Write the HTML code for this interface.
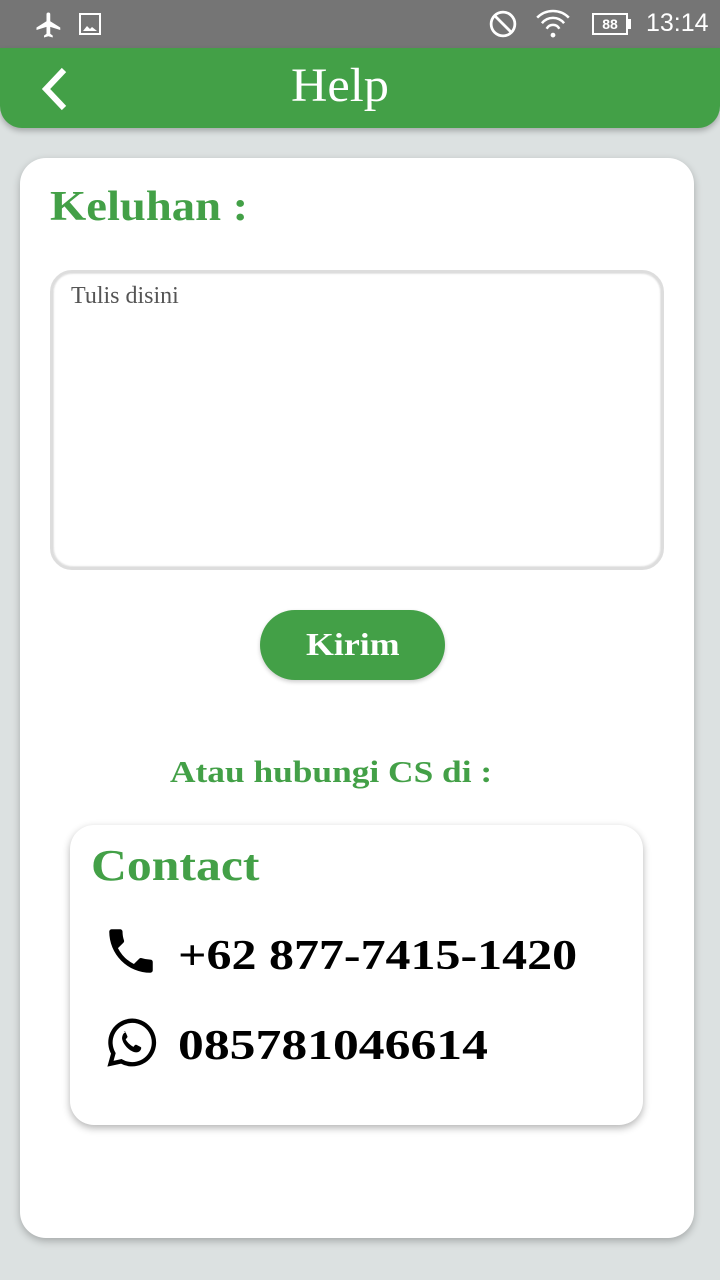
<!DOCTYPE html>
<html><head><meta charset="utf-8"><style>
*{margin:0;padding:0;box-sizing:border-box}
body{width:720px;height:1280px;background:#dce1e1;position:relative;overflow:hidden;font-family:"Liberation Serif",serif}
.sb{position:absolute;top:0;left:0;width:720px;height:48px;background:#757575;color:#fff;font-family:"Liberation Sans",sans-serif}
.bar{position:absolute;top:48px;left:0;width:720px;height:80px;background:#43a047;border-radius:0 0 22px 22px;box-shadow:0 3px 6px rgba(0,0,0,.25)}
.bar h1{position:absolute;left:291px;top:10px;font-weight:normal;color:#fff;font-size:48px;transform:scaleX(1.05);transform-origin:left}
.card{position:absolute;left:20px;top:158px;width:674px;height:1080px;background:#fff;border-radius:26px;box-shadow:0 3px 8px rgba(0,0,0,.25)}
.g{color:#43a047;font-weight:bold;position:absolute;transform-origin:left;white-space:nowrap}
.ta{position:absolute;left:50px;top:270px;width:614px;height:300px;border:3px solid #ddd;border-radius:22px;box-shadow:inset 0 0 2px #bbb}
.ta span{position:absolute;left:18px;top:10px;font-size:24px;color:#555}
.btn{position:absolute;left:260px;top:610px;width:185px;height:70px;background:#43a047;border-radius:35px;color:#fff;font-weight:bold;font-size:32px;text-align:center;line-height:68px;box-shadow:0 2px 4px rgba(0,0,0,.2)}
.btn span{display:inline-block;transform:scaleX(1.12)}
.ct{position:absolute;left:70px;top:825px;width:573px;height:300px;background:#fff;border-radius:24px;box-shadow:0 3px 8px rgba(0,0,0,.3)}
.num{position:absolute;font-weight:bold;font-size:42px;color:#000;transform-origin:left;white-space:nowrap}
</style></head><body>
<div class="sb">
<svg style="position:absolute;left:34px;top:10px" width="30" height="30" viewBox="0 0 24 24"><path fill="#fff" d="M21 16v-2l-8-5V3.5a1.5 1.5 0 0 0-3 0V9l-8 5v2l8-2.5V19l-2 1.5V22l3.5-1 3.5 1v-1.5L13 19v-5.5z"/></svg>
<svg style="position:absolute;left:78px;top:12px" width="24" height="24" viewBox="0 0 24 24"><rect x="2" y="2" width="20" height="20" fill="none" stroke="#fff" stroke-width="2"/><path fill="#fff" d="M5 19l4-5 3 3 2-2 5 4z"/></svg>
<svg style="position:absolute;left:488px;top:9px" width="30" height="30" viewBox="0 0 24 24"><circle cx="12" cy="12" r="9.5" fill="none" stroke="#fff" stroke-width="2.2"/><path d="M5.5 5.5l13 13" stroke="#fff" stroke-width="2.2"/></svg>
<svg style="position:absolute;left:534px;top:8px" width="38" height="32" viewBox="0 0 24 20"><path d="M2 6a14 14 0 0 1 20 0M5 9.5a9 9 0 0 1 14 0M8 13a4.5 4.5 0 0 1 8 0" fill="none" stroke="#fff" stroke-width="1.6"/><circle cx="12" cy="17" r="1.5" fill="#fff"/></svg>
<div style="position:absolute;left:592px;top:13px;width:36px;height:22px;border:2px solid #fff;font-size:14px;font-weight:bold;text-align:center;line-height:18px">88</div>
<div style="position:absolute;left:628px;top:19px;width:3px;height:10px;background:#fff"></div>
<div style="position:absolute;left:646px;top:9px;font-size:25px">13:14</div>
</div>
<div class="bar">
<svg style="position:absolute;left:38px;top:18px" width="34" height="46" viewBox="0 0 34 46"><path d="M26 4L8 23l18 19" fill="none" stroke="#fff" stroke-width="6"/></svg>
<h1>Help</h1>
</div>
<div class="card"></div>
<div class="g" style="left:50px;top:183px;font-size:42px;transform:scaleX(1.11)">Keluhan :</div>
<div class="ta"><span>Tulis disini</span></div>
<div class="btn"><span>Kirim</span></div>
<div class="g" style="left:170px;top:754px;font-size:31px;transform:scaleX(1.14)">Atau hubungi CS di :</div>
<div class="ct"></div>
<div class="g" style="left:91px;top:840px;font-size:44px;transform:scaleX(1.13)">Contact</div>
<svg style="position:absolute;left:102px;top:922px" width="58" height="58" viewBox="0 0 24 24"><path fill="#000" d="M6.6 10.8a15 15 0 0 0 6.6 6.6l2.2-2.2a1 1 0 0 1 1-.25 11.4 11.4 0 0 0 3.6.6 1 1 0 0 1 1 1V20a1 1 0 0 1-1 1A17 17 0 0 1 3 4a1 1 0 0 1 1-1h3.5a1 1 0 0 1 1 1c0 1.25.2 2.45.6 3.6a1 1 0 0 1-.25 1z"/></svg>
<div class="num" style="left:178px;top:932px;transform:scaleX(1.19)">+62 877-7415-1420</div>
<svg style="position:absolute;left:102px;top:1013px" width="58" height="58" viewBox="0 0 24 24"><path fill="none" stroke="#000" stroke-width="1.8" d="M3.5 21l1.2-4.3A9 9 0 1 1 8 20z"/><path fill="#000" d="M9 7.5c.4 0 .6 0 .8.5l.7 1.6c.1.3 0 .5-.2.7l-.5.6c.7 1.3 1.8 2.4 3.2 3.1l.6-.7c.2-.2.4-.2.7-.1l1.6.8c.3.2.4.3.3.7-.2 1-1 1.6-2 1.6-2.6-.2-5.6-3.2-5.9-5.8 0-1 .5-2.5 1.6-2.5z"/></svg>
<div class="num" style="left:178px;top:1022px;transform:scaleX(1.23)">085781046614</div>
</body></html>
